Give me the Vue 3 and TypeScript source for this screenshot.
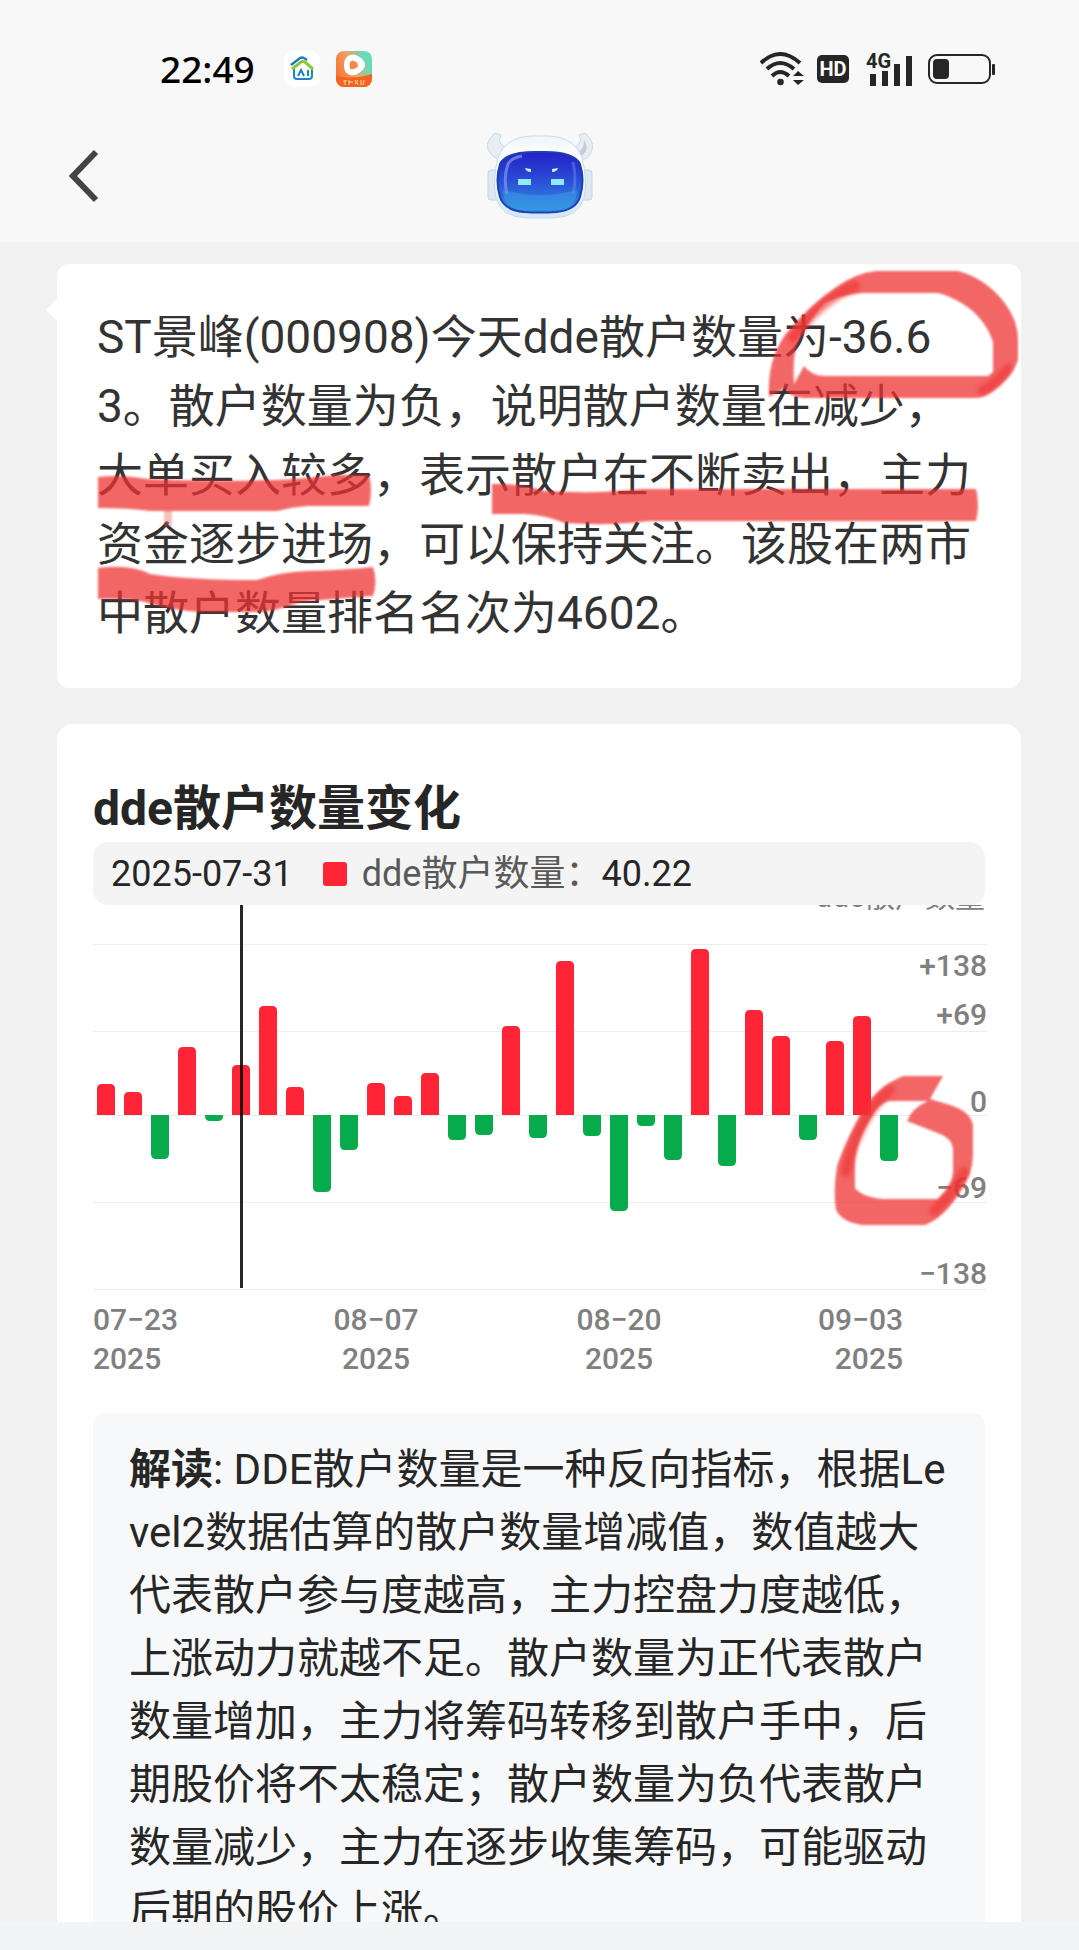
<script setup lang="ts">
interface Bar {
  x: number
  path: string
  up: boolean
}

// Signed bar lengths in chart units, one per trading day
const lengths: number[] = [
  31, 23, -44, 68, -6, 50, 109, 28, -77, -35, 32, 19, 42, -25, -20, 89, -23, 154,
  -21, -96, -11, -45, 166, -51, 105, 79, -25, 74, 99, -46,
]

const baseline = 210
const barWidth = 18
const step = 27

function barPath(x: number, length: number): string {
  const r = Math.min(5, Math.abs(length))
  const dir = length > 0 ? -1 : 1
  const end = baseline - length
  const near = end - dir * r
  const right = x + barWidth
  return `M${x} ${baseline}V${near}Q${x} ${end} ${x + r} ${end}H${right - r}Q${right} ${end} ${right} ${near}V${baseline}Z`
}

const bars: Bar[] = lengths.map((length, i) => {
  const x = 4 + i * step
  return { x, path: barPath(x, length), up: length > 0 }
})

const gridLines: number[] = [39, 126, 210, 297, 384]

const yLabels = [
  { text: '+138', y: 71 },
  { text: '+69', y: 120 },
  { text: '0', y: 207 },
  { text: '−69', y: 293 },
  { text: '−138', y: 379 },
]

const xLabels = [
  { day: '07−23', x: 0, anchor: 'start' },
  { day: '08−07', x: 283, anchor: 'middle' },
  { day: '08−20', x: 526, anchor: 'middle' },
  { day: '09−03', x: 810, anchor: 'end' },
] as const
</script>

<template>
  <div class="screen">
    <header class="top">
      <div class="status">
        <div class="status-left">
          <time class="clock">22:49</time>
          <svg class="app-icon" viewBox="0 0 36 36" aria-hidden="true">
            <rect width="36" height="36" rx="9" fill="#fff" />
            <path d="M10 18v7q0 3 3 3h12q3 0 3-3v-9" fill="none" stroke="#1d86bd" stroke-width="2" />
            <path d="M7 14L16 7q2-1 4 0l3 2" fill="none" stroke="#1b7fb8" stroke-width="2.500" />
            <path d="M8 18l9-7q2-1 4 0l8 7" fill="none" stroke="#8cc63c" stroke-width="3" />
            <path d="M14 25l3-6 3 6M24 19v6" fill="none" stroke="#1d86bd" stroke-width="2" />
          </svg>
          <svg class="app-icon" viewBox="0 0 36 36" aria-hidden="true">
            <defs>
              <linearGradient id="play-bg" x1="0" y1=".6" x2="1" y2=".2">
                <stop offset="0" stop-color="#f9752f" />
                <stop offset=".45" stop-color="#e9a470" />
                <stop offset=".85" stop-color="#66dcbc" />
              </linearGradient>
              <clipPath id="play-clip"><rect width="36" height="36" rx="8" /></clipPath>
            </defs>
            <g clip-path="url(#play-clip)">
              <rect width="36" height="36" fill="url(#play-bg)" />
              <path d="M0 25q18 4 36-2v13H0z" fill="#f7621f" />
              <path d="M12 5q5-3 10 0 7 4 7 9 0 4-6 8-6 4-11 1-4-2-4-9 0-6 4-9z" fill="#fff" />
              <path d="M15 10q2-1 5 1 2 1 2 3t-2 3q-3 2-6 1-1-6 1-8z" fill="#f28a4a" />
              <path d="M7 30h4M9 29v5M13 29v5M13 31h4M19 29l3 5M22 29l-3 4M25 29v5M28 29l-1 5" stroke="#ffd9a8" stroke-width="1" fill="none" />
            </g>
          </svg>
        </div>
        <div class="status-right">
          <svg class="wifi" viewBox="0 0 45 36" aria-hidden="true">
            <g fill="none" stroke="#262626" stroke-width="4">
              <path d="M1 12Q20-6 40 12" />
              <path d="M7 18Q20 6 34 18" />
              <path d="M12 25Q20 17 29 25" />
            </g>
            <circle cx="20.500" cy="31" r="3.300" fill="#262626" />
            <path d="M33 25l5-5 6 5zM33 29h11l-6 5z" fill="#262626" />
          </svg>
          <svg class="hd" viewBox="0 0 32 28" role="img" aria-label="HD">
            <rect width="32" height="28" rx="5" fill="#262626" />
            <text x="16" y="21" text-anchor="middle" class="hd-text">HD</text>
          </svg>
          <svg class="signal" viewBox="0 0 47 33" aria-hidden="true">
            <text x="0" y="15" class="net-text">4G</text>
            <path d="M4 21h6v12h-6zM16 18h6v15h-6zM28 11h6v22h-6zM40 3h6v30h-6z" fill="#262626" />
          </svg>
          <svg class="battery" viewBox="0 0 67 30" aria-hidden="true">
            <rect x="1" y="1" width="61" height="28" rx="8" fill="none" stroke="#262626" stroke-width="2" />
            <rect x="5" y="5" width="16" height="20" rx="4" fill="#262626" />
            <rect x="64" y="10" width="3" height="11" rx="1" fill="#262626" />
          </svg>
        </div>
      </div>

      <nav class="nav">
        <button class="back" type="button" aria-label="返回">
          <svg viewBox="0 0 30 54" aria-hidden="true">
            <path d="M27 3L4 27l23 24" fill="none" stroke="#444" stroke-width="6" />
          </svg>
        </button>
        <svg class="robot" viewBox="0 0 108 88" aria-hidden="true">
          <defs>
            <linearGradient id="visor" x1="0" y1="0" x2="0" y2="1">
              <stop offset="0" stop-color="#2420c4" />
              <stop offset=".45" stop-color="#2a4bd6" />
              <stop offset="1" stop-color="#2f93e0" />
            </linearGradient>
            <linearGradient id="shell" x1="0" y1="0" x2="0" y2="1">
              <stop offset="0" stop-color="#f1f5f9" />
              <stop offset=".3" stop-color="#fff" />
              <stop offset="1" stop-color="#d3e6f5" />
            </linearGradient>
          </defs>
          <rect x="2" y="38" width="12" height="30" rx="3" fill="#e1e7ee" stroke="#b9d9ec" />
          <rect x="94" y="38" width="12" height="30" rx="3" fill="#e1e7ee" stroke="#b9d9ec" />
          <path d="M9 1Q-4 12 5 22q6 8 18 2l6-10q-12 4-15-4-1-3 1-7z" fill="#e9edf2" stroke="#bfdcec" />
          <path d="M99 1q13 11 4 23-6 7-18 0l-6-10q12 4 15-4 1-3-1-7z" fill="#e9edf2" stroke="#bfdcec" />
          <path d="M98 8q6 9-1 15-5 4-10 0 12-5 11-15z" fill="#c6cdd8" />
          <path d="M54 4Q20 2 12 26 6 48 10 66q5 19 30 20h28q25-1 30-20 4-18-2-40Q88 2 54 4z" fill="url(#shell)" stroke="#bfdef2" />
          <path d="M54 20q-34-1-40 12-5 16 0 33 4 13 24 15 16 1 32 0 20-2 24-15 5-17 0-33-6-13-40-12z" fill="url(#visor)" stroke="#1e3fae" stroke-width="2" />
          <path d="M21 62q-4-16 1-30 3-6 14-8" fill="none" stroke="#8298f0" stroke-width="3" opacity=".7" />
          <path d="M87 30q4 16 0 32" fill="none" stroke="#7390ee" stroke-width="3" opacity=".45" />
          <path d="M17 58q36 10 74 0-1 20-18 20H36q-18 0-19-20z" fill="#3ba0e6" opacity=".5" />
          <path d="M32 47h13v6H32zM65 47h13v6H65z" fill="#8fe9f8" />
          <path d="M39 36l6 1v3q-5 0-6-4zM72 36l-6 1v3q5 0 6-4z" fill="#b6f3ff" />
        </svg>
      </nav>
    </header>

    <main class="content">
      <section class="card answer">
        <p class="answer-text">ST景峰(000908)今天dde散户数量为-36.63。散户数量为负，说明散户数量在减少，大单买入较多，表示散户在不断卖出，主力资金逐步进场，可以保持关注。该股在两市中散户数量排名名次为4602。</p>
        <svg class="marks" viewBox="57 264 964 424" aria-hidden="true">
          <g class="ink">
            <path d="M98 477Q120 474 147 479 210 482 277 480 300 479 337 475H369Q373 490 369 506H307Q292 507 277 511H150Q130 508 98 508Z" />
            <path d="M492 484Q520 483 545 491 600 494 640 489H976Q980 505 976 521H650Q610 526 565 523 545 515 525 514H492Z" />
            <path d="M98 568Q130 564 150 574 190 580 257 580 280 572 307 571 345 570 373 567 378 582 373 596 330 599 300 602 275 612 255 612H200Q170 610 145 602 125 598 98 599Z" />
            <path d="M769 397Q767 360 785 335 810 305 835 288 855 273 876 271H958Q985 278 1004 302 1018 320 1018 340V360Q1012 378 992 392 983 398 975 398H803Q788 396 785 388ZM794 384L804 366Q812 377 829 376H988L993 372V342Q985 318 963 304 950 296 938 293H862Q840 295 825 303 812 316 800 338 792 352 794 384Z" fill-rule="evenodd" />
          </g>
          <g class="ink-deep">
            <path d="M793 338Q820 300 855 286" stroke-width="10" />
            <path d="M1008 368Q996 384 982 391" stroke-width="9" />
          </g>
          <path class="ink-drip" d="M168 508V526" />
        </svg>
      </section>

      <section class="card detail">
        <h1 class="title">dde散户数量变化</h1>
        <div class="tip">
          <span class="tip-date">2025-07-31</span>
          <span class="swatch"></span>
          <span class="tip-name">dde散户数量：</span>
          <span class="tip-value">40.22</span>
        </div>

        <div class="chart-wrap">
          <svg class="chart" viewBox="0 0 894 508" role="img" aria-label="dde散户数量变化">
            <path v-for="y in gridLines" :key="y" :d="`M0 ${y + 0.5}H894`" stroke="#ededed" stroke-width="1" />
            <path v-for="bar in bars" :key="bar.x" :d="bar.path" :fill="bar.up ? '#ff2436' : '#07ab4b'" />
            <rect x="147" y="0" width="3" height="383" fill="#000" opacity=".85" />
            <text class="axis-name" x="892" y="2" text-anchor="end">dde散户数量</text>
            <text v-for="label in yLabels" :key="label.text" class="axis" x="894" :y="label.y" text-anchor="end">{{ label.text }}</text>
            <g v-for="label in xLabels" :key="label.day">
              <text class="axis" :x="label.x" y="425" :text-anchor="label.anchor">{{ label.day }}</text>
              <text class="axis" :x="label.x" y="464" :text-anchor="label.anchor">2025</text>
            </g>
          </svg>
          <svg class="marks" viewBox="93 905 894 508" aria-hidden="true">
            <g class="ink">
              <path d="M943 1076H903Q880 1085 864 1108 845 1142 837 1166 833 1190 836 1210 842 1222 862 1225H925Q943 1218 958 1195 973 1175 973 1155V1125Q970 1111 950 1105L930 1099ZM928 1101H889Q880 1103 874 1113 855 1142 855 1165V1188Q862 1197 883 1199H938Q953 1185 953 1172V1148Q951 1138 940 1134L907 1121Q912 1108 928 1101Z" fill-rule="evenodd" />
            </g>
            <g class="ink-deep">
              <path d="M890 1090Q872 1104 860 1130 848 1155 846 1172" stroke-width="10" />
              <path d="M964 1172Q950 1198 934 1211" stroke-width="10" />
            </g>
          </svg>
        </div>

        <p class="explain"><strong>解读</strong>: DDE散户数量是一种反向指标，根据Level2数据估算的散户数量增减值，数值越大代表散户参与度越高，主力控盘力度越低，上涨动力就越不足。散户数量为正代表散户数量增加，主力将筹码转移到散户手中，后期股价将不太稳定；散户数量为负代表散户数量减少，主力在逐步收集筹码，可能驱动后期的股价上涨。</p>
      </section>
    </main>
    <footer class="bottom"></footer>
  </div>
</template>

<style>
body {
  margin: 0;
}
</style>

<style scoped>
.screen {
  display: flex;
  flex-direction: column;
  height: 100vh;
  background: #f1f1f1;
  color: #333;
  font-family: Roboto, "Noto Sans CJK SC", sans-serif;
}

.top {
  flex: none;
  background: #f8f8f8;
}

.status {
  display: flex;
  align-items: center;
  justify-content: space-between;
  height: 132px;
  box-sizing: border-box;
  padding: 6px 84px 0 160px;
}

.status-left,
.status-right {
  display: flex;
  align-items: center;
}

.status-left {
  gap: 16px;
}

.clock {
  margin-right: 13px;
  color: #000;
  font: 500 37px/44px "Noto Sans", sans-serif;
}

.app-icon {
  width: 36px;
  height: 36px;
}

.wifi {
  width: 45px;
  height: 36px;
  margin-right: 12px;
}

.hd {
  width: 32px;
  height: 28px;
  margin-right: 17px;
}

.hd-text {
  fill: #fff;
  font: 700 20px Roboto, sans-serif;
}

.signal {
  width: 47px;
  height: 33px;
  margin-right: 15px;
  overflow: visible;
}

.net-text {
  fill: #262626;
  font: 700 20px Roboto, sans-serif;
}

.battery {
  width: 67px;
  height: 30px;
}

.nav {
  display: grid;
  grid-template-columns: 1fr auto 1fr;
  align-items: center;
  height: 88px;
  padding-bottom: 22px;
}

.back {
  justify-self: start;
  margin-left: 61px;
  padding: 0 8px;
  border: 0;
  background: none;
  line-height: 0;
}

.back svg {
  width: 30px;
  height: 54px;
}

.robot {
  width: 108px;
  height: 88px;
}

.content {
  flex: 1;
  min-height: 0;
  overflow: hidden;
  padding: 22px 58px 0 57px;
}

.card {
  position: relative;
  background: #fff;
}

.answer {
  margin-bottom: 36px;
  padding: 39px 44px 40px 40px;
  border-radius: 12px;
}

.answer::before {
  content: "";
  position: absolute;
  top: 35px;
  left: -11px;
  border-style: solid;
  border-width: 11px 11px 11px 0;
  border-color: transparent #fff;
}

.answer-text {
  margin: 0;
  font-size: 46px;
  line-height: 69px;
  word-break: break-all;
}

.marks {
  position: absolute;
  top: 0;
  left: 0;
  width: 100%;
  overflow: visible;
  pointer-events: none;
}

.ink {
  fill: #ee3232;
  opacity: 0.74;
  filter: blur(1px);
}

.ink-deep {
  fill: none;
  stroke: #ee3030;
  stroke-linecap: round;
  opacity: 0.6;
  filter: blur(2px);
}

.ink-drip {
  fill: none;
  stroke: #f06060;
  stroke-width: 8;
  opacity: 0.4;
  filter: blur(1px);
}

.detail {
  padding: 52px 34px 36px 36px;
  border-radius: 16px;
}

.title {
  margin: 0;
  color: #262626;
  font-size: 48px;
  font-weight: 700;
  line-height: 66px;
}

.tip {
  display: flex;
  align-items: center;
  height: 63px;
  margin-right: 2px;
  box-sizing: border-box;
  padding: 0 18px;
  border-radius: 15px;
  background: #f4f4f4;
  color: #262626;
  font-size: 36px;
  line-height: 54px;
  white-space: nowrap;
}

.swatch {
  width: 24px;
  height: 24px;
  margin: 0 15px 0 30px;
  border-radius: 3px;
  background: #ff2436;
}

.tip-name {
  color: #595959;
}

.chart-wrap {
  position: relative;
}

.chart {
  display: block;
  width: 100%;
}

.axis,
.axis-name {
  fill: #808080;
  font-size: 30px;
}

.axis {
  font-weight: 500;
}

.explain {
  margin: 0 2px 0 0;
  padding: 25px 36px;
  border-radius: 12px;
  background: #f7f8fa;
  color: #262626;
  font-size: 42px;
  line-height: 63px;
  word-break: break-all;
}

.bottom {
  flex: none;
  height: 28px;
  background: #f3f4f6;
}
</style>
